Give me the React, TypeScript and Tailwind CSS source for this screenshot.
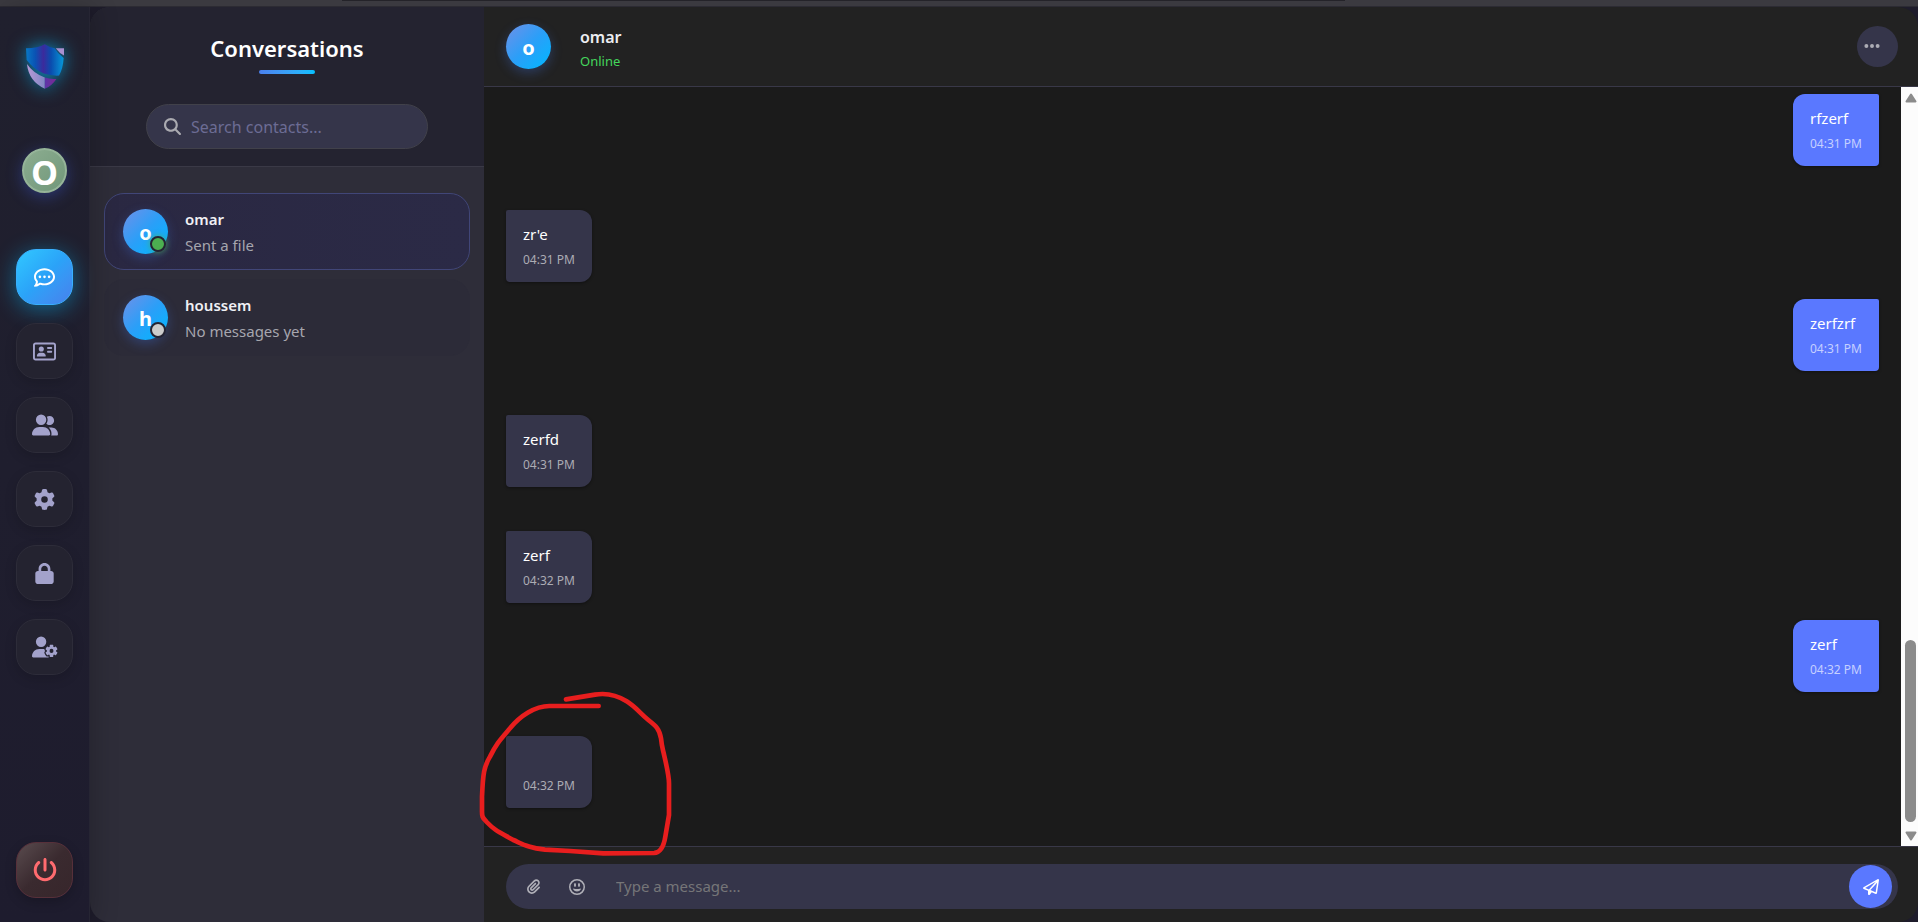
import React from "react";
import type { IconType } from "react-icons";
import {
  FaEllipsis,
  FaGear,
  FaLock,
  FaMagnifyingGlass,
  FaPaperclip,
  FaPowerOff,
  FaRegAddressCard,
  FaRegCommentDots,
  FaRegFaceGrinWide,
  FaRegPaperPlane,
  FaUserGear,
  FaUserGroup,
} from "react-icons/fa6";

type Contact = { name: string; preview: string; online: boolean; selected: boolean };
type Message = { text: string; time: string; sent: boolean };

const navItems: { label: string; icon: IconType; size: string }[] = [
  { label: "Chats", icon: FaRegCommentDots, size: "size-[21px]" },
  { label: "Contacts", icon: FaRegAddressCard, size: "size-[23px]" },
  { label: "Groups", icon: FaUserGroup, size: "size-[26px]" },
  { label: "Settings", icon: FaGear, size: "size-[21px]" },
  { label: "Privacy", icon: FaLock, size: "size-[21px]" },
  { label: "Account", icon: FaUserGear, size: "size-[26px]" },
];

const contacts: Contact[] = [
  { name: "omar", preview: "Sent a file", online: true, selected: true },
  { name: "houssem", preview: "No messages yet", online: false, selected: false },
];

const messages: Message[] = [
  { text: "rfzerf", time: "04:31 PM", sent: true },
  { text: "zr'e", time: "04:31 PM", sent: false },
  { text: "zerfzrf", time: "04:31 PM", sent: true },
  { text: "zerfd", time: "04:31 PM", sent: false },
  { text: "zerf", time: "04:32 PM", sent: false },
  { text: "zerf", time: "04:32 PM", sent: true },
  { text: "", time: "04:32 PM", sent: false },
];

function ShieldLogo() {
  return (
    <svg
      viewBox="0 0 115 135"
      className="h-[45px] w-[38px] overflow-visible drop-shadow-[0_0_9px_rgba(0,190,255,0.65)]"
      role="img"
      aria-label="Shield"
    >
      <defs>
        <linearGradient id="shield-top" x1="0" x2="1">
          <stop offset="0" stopColor="#0878c4" />
          <stop offset="0.25" stopColor="#0a52b4" />
          <stop offset="0.46" stopColor="#3c2a9c" />
          <stop offset="0.66" stopColor="#0a4cae" />
          <stop offset="1" stopColor="#0798d8" />
        </linearGradient>
        <linearGradient id="shield-left" x1="0" x2="1">
          <stop offset="0" stopColor="#b79ad6" />
          <stop offset="1" stopColor="#8087c4" />
        </linearGradient>
        <linearGradient id="shield-right" x1="0" x2="1">
          <stop offset="0" stopColor="#5c35a8" />
          <stop offset="1" stopColor="#7a2a92" />
        </linearGradient>
      </defs>
      <path d="M0 12 Q36 12 57 0 Q70 9 87 12 Q95 27 114 42 Q112 74 100 95 Q40 98 2 48 Z" fill="url(#shield-top)" />
      <path d="M90 12 H115 V34 Q101 27 90 12 Z" fill="#a990d0" />
      <path d="M3 60 Q22 88 57 101 V135 Q8 112 3 60 Z" fill="url(#shield-left)" />
      <path d="M57 101 Q75 107 92 105 Q78 126 57 135 Z" fill="url(#shield-right)" />
    </svg>
  );
}

function Avatar({ letter }: { letter: string }) {
  return (
    <span className="flex size-[45px] items-center justify-center rounded-full bg-linear-to-br/srgb from-[#7090e8] via-[#2a9ff8] to-[#00b8ff] pt-[2px] text-xl leading-none font-bold text-white shadow-[0_4px_12px_rgba(66,120,240,0.3)]">
      {letter}
    </span>
  );
}

function Sidebar() {
  return (
    <aside className="relative z-20 flex w-[90px] shrink-0 flex-col items-center border-r border-[#262533] bg-linear-to-b from-[#20202e] to-[#1e1c2e] pt-[37px] pb-6 shadow-[4px_0_24px_rgba(0,0,0,0.2)]">
      <ShieldLogo />
      <button
        type="button"
        aria-label="Profile"
        className="mt-[59px] flex size-[45px] items-center justify-center rounded-full border-2 border-[#95b499] bg-linear-to-br from-[#8cad90] to-[#71977a] pt-[2px] font-['Open_Sans'] text-[34px] leading-none font-bold text-white shadow-[0_4px_16px_rgba(60,90,220,0.4)]"
      >
        O
      </button>
      <nav className="mt-14 flex flex-col gap-[18px]">
        {navItems.map(({ label, icon: Icon, size }, i) => (
          <a
            key={label}
            href={`#${label.toLowerCase()}`}
            aria-label={label}
            className={
              i === 0
                ? "flex h-14 w-[57px] items-center justify-center rounded-[20px] border border-[#38b0ff] bg-linear-to-br from-[#32c8ff] via-[#2ba2f8] to-[#4680ec] text-white shadow-[0_4px_22px_rgba(0,190,255,0.45)]"
                : "flex h-14 w-[57px] items-center justify-center rounded-[20px] border border-[#2d2c39] bg-[#242330] text-[#a3a2cb] shadow-[0_4px_12px_rgba(0,0,0,0.15)]"
            }
          >
            <Icon className={size} />
          </a>
        ))}
      </nav>
      <button
        type="button"
        aria-label="Log out"
        className="mt-auto flex h-14 w-[57px] items-center justify-center rounded-[20px] border border-[#57303a] bg-linear-to-br from-[#5a4c4f] via-[#3a2a2f] to-[#37262b] text-[#ff6b6f] shadow-[0_4px_12px_rgba(0,0,0,0.2)]"
      >
        <FaPowerOff className="size-6" />
      </button>
    </aside>
  );
}

function Conversations() {
  return (
    <section className="flex w-[394px] shrink-0 flex-col overflow-hidden rounded-l-[20px] bg-[#2e2d39]">
      <header className="flex flex-col items-center border-b border-[#3a3946] bg-[#242330] px-14 pt-[23px] pb-[17px]">
        <h1 className="text-[22px] leading-9 font-semibold text-white">Conversations</h1>
        <span className="mt-1 h-1 w-14 rounded-full bg-linear-to-r from-[#4a80ee] to-[#00c0ff]" />
        <label className="mt-[30px] flex h-[45px] w-[282px] items-center gap-[10px] rounded-full border border-[#41414a] bg-[#35354a] pr-4 pl-[17px]">
          <FaMagnifyingGlass className="size-[17px] shrink-0 text-[#aaaab0]" />
          <input
            type="text"
            aria-label="Search contacts"
            placeholder="Search contacts..."
            className="w-full min-w-0 bg-transparent text-base text-white outline-none placeholder:text-[#6c6c94]"
          />
        </label>
      </header>
      <ul className="flex flex-col gap-[9px] px-[14px] pt-[26px]">
        {contacts.map((c) => (
          <li key={c.name}>
            <button
              type="button"
              className={
                c.selected
                  ? "flex h-[77px] w-full items-center gap-[17px] rounded-[20px] border border-[#414678] bg-linear-to-r from-[#2a2842] to-[#2b2a46] px-[18px] text-left"
                  : "flex h-[77px] w-full items-center gap-[17px] rounded-[20px] border border-[#2c2b38] bg-[#2c2b38] px-[18px] text-left"
              }
            >
              <span className="relative">
                <Avatar letter={c.name[0]} />
                <span
                  className={
                    c.online
                      ? "absolute right-[2px] bottom-[2px] size-4 rounded-full border-2 border-[#242433] bg-[#4caf50] shadow-[0_0_6px_rgba(76,175,80,0.8)]"
                      : "absolute right-[2px] bottom-[2px] size-4 rounded-full border-2 border-[#242433] bg-[#cccccc]"
                  }
                />
              </span>
              <span className="flex flex-col gap-[2px]">
                <span className="text-[15px] leading-6 font-semibold text-[#f0f0f4]">{c.name}</span>
                <span className="text-[15px] leading-6 text-[#a6a6ae]">{c.preview}</span>
              </span>
            </button>
          </li>
        ))}
      </ul>
    </section>
  );
}

function Bubble({ message }: { message: Message }) {
  return (
    <li
      className={
        message.sent
          ? "mt-[17px] flex h-[72px] min-w-[86px] shrink-0 flex-col self-end rounded-tl-xl rounded-tr-xs rounded-br-sm rounded-bl-xl bg-[#5a78ff] px-[17px] pt-3 text-white shadow-[0_1px_3px_rgba(0,0,0,0.4)]"
          : "mt-11 flex h-[72px] min-w-[86px] shrink-0 flex-col self-start rounded-tl-xs rounded-tr-xl rounded-br-xl rounded-bl-sm bg-[#35354a] px-[17px] pt-3 text-white shadow-[0_1px_3px_rgba(0,0,0,0.4)]"
      }
    >
      <p className="h-[26px] text-[15px] leading-6">{message.text}</p>
      <time className={message.sent ? "text-xs leading-6 text-[#c6d0ff]" : "text-xs leading-6 text-[#acacb4]"}>
        {message.time}
      </time>
    </li>
  );
}

function ScrollTrack() {
  return (
    <div className="flex w-[17px] shrink-0 flex-col items-center bg-[#fcfcfc] pt-[6px] pb-[5px] pl-[2px]" aria-hidden="true">
      <svg viewBox="0 0 12 10" className="h-[10px] w-3">
        <path d="M6 1.5 10.5 8.5H1.5Z" fill="#8b8b8b" stroke="#8b8b8b" strokeWidth="2" strokeLinejoin="round" />
      </svg>
      <span className="mt-auto mb-[9px] h-[182px] w-[11px] rounded-full bg-[#8b8b8b]" />
      <svg viewBox="0 0 12 10" className="h-[10px] w-3">
        <path d="M6 8.5 10.5 1.5H1.5Z" fill="#8b8b8b" stroke="#8b8b8b" strokeWidth="2" strokeLinejoin="round" />
      </svg>
    </div>
  );
}

function Scribble() {
  return (
    <svg
      viewBox="0 0 720 660"
      className="pointer-events-none absolute bottom-[-34px] left-[-24px] h-[220px] w-[240px] overflow-visible"
      aria-hidden="true"
    >
      <path
        d="M318 118 L405 104 C435 99 465 102 500 124 C530 143 540 160 565 180 C588 198 598 206 603 235 C606 265 608 265 613 288 C624 335 627 350 627 370 L627 465 L616 530 C612 555 605 578 582 579 L430 580 L330 573 L255 569 C205 563 190 553 160 540 C115 515 105 512 80 486 C68 472 66 472 66 455 L66 410 C69 340 72 320 90 290 C110 250 120 240 150 205 C180 168 225 138 268 138 L416 138"
        fill="none"
        stroke="#e81e1e"
        strokeWidth="14"
        strokeLinecap="round"
        strokeLinejoin="round"
      />
    </svg>
  );
}

function Chat() {
  return (
    <main className="flex min-w-0 flex-1 flex-col">
      <header className="flex h-20 shrink-0 items-center rounded-tr-[20px] border-b border-[#393848] bg-[#222222] pr-5 pl-[22px]">
        <Avatar letter="o" />
        <div className="ml-[29px] flex flex-col pt-1">
          <h2 className="text-base leading-6 font-semibold text-[#ececf0]">omar</h2>
          <p className="text-[13px] leading-6 text-[#44d65c]">Online</p>
        </div>
        <button
          type="button"
          aria-label="More options"
          className="ml-auto flex size-[41px] items-center rounded-full bg-[#35354a] pb-[2px] pl-[6px] text-[#acacb4]"
        >
          <FaEllipsis className="size-[18px]" />
        </button>
      </header>
      <div className="relative z-10 flex min-h-0 flex-1 bg-[#1b1b1b]">
        <ul className="flex min-w-0 flex-1 flex-col justify-end pr-[22px] pb-[38px] pl-[22px]">
          {messages.map((m, i) => (
            <Bubble key={i} message={m} />
          ))}
        </ul>
        <ScrollTrack />
        <Scribble />
      </div>
      <form className="rounded-br-[20px] border-t border-[#393848] bg-[#222222] pt-[17px] pr-5 pb-[13px] pl-[22px]">
        <div className="flex h-[45px] items-center rounded-full bg-[#35354a] pr-[6px] pl-5 text-[#b0b0b8]">
          <button type="button" aria-label="Attach file" className="w-[43px]">
            <FaPaperclip className="size-[15px]" />
          </button>
          <button type="button" aria-label="Insert emoji" className="w-[47px]">
            <FaRegFaceGrinWide className="size-4" />
          </button>
          <input
            type="text"
            aria-label="Message"
            placeholder="Type a message..."
            className="min-w-0 flex-1 bg-transparent text-[15px] text-white outline-none placeholder:text-[#757578]"
          />
          <button
            type="submit"
            aria-label="Send"
            className="flex size-[43px] items-center justify-center rounded-full bg-[#5a78ff] text-white"
          >
            <FaRegPaperPlane className="size-4" />
          </button>
        </div>
      </form>
    </main>
  );
}

export default function App() {
  return (
    <div className="flex h-screen flex-col overflow-hidden bg-[#1e1c2b] font-['Noto_Sans','Open_Sans',sans-serif]">
      <div className="flex h-[7px] shrink-0 flex-col items-start border-b border-[#2c2b33] bg-[#3b3a40] pl-[342px]">
        <span className="h-px w-[1003px] bg-[#242329]" />
      </div>
      <div className="flex min-h-0 flex-1">
        <Sidebar />
        <Conversations />
        <Chat />
      </div>
    </div>
  );
}
